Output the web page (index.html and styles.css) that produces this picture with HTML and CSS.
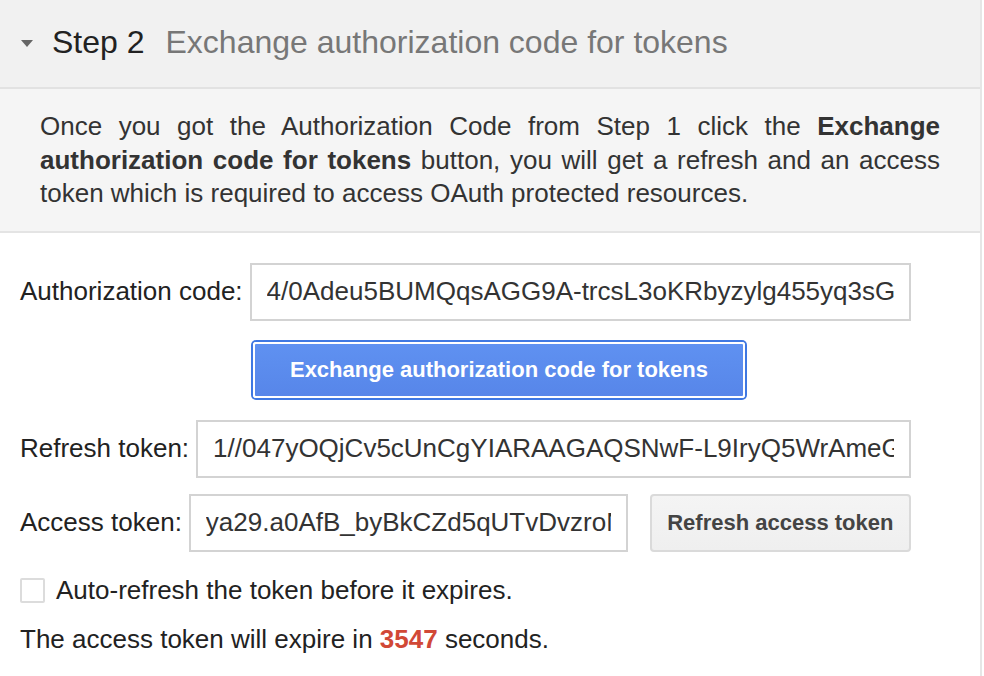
FILE: index.html
```html
<!DOCTYPE html>
<html>
<head>
<meta charset="utf-8">
<link rel="stylesheet" href="styles.css">
</head>
<body>
<div class="panel">
  <div class="step-header">
    <span class="caret"></span>
    <span class="step-num">Step 2</span>
    <span class="step-title">Exchange authorization code for tokens</span>
  </div>
  <div class="desc">
    <p>Once you got the Authorization Code from Step 1 click the <b>Exchange authorization code for tokens</b> button, you will get a refresh and an access token which is required to access OAuth protected resources.</p>
  </div>
  <div class="form">
    <div class="row">
      <label class="lbl">Authorization code:</label>
      <input class="field field-auth" type="text" value="4/0Adeu5BUMQqsAGG9A-trcsL3oKRbyzylg455yq3sGZwX8kQp">
    </div>
    <div class="row row-btn">
      <button class="btn-primary">Exchange authorization code for tokens</button>
    </div>
    <div class="row row-refresh">
      <label class="lbl">Refresh token:</label>
      <input class="field field-refresh" type="text" value="1//047yOQjCv5cUnCgYIARAAGAQSNwF-L9IryQ5WrAmeGwq7">
    </div>
    <div class="row row-access">
      <label class="lbl">Access token:</label>
      <input class="field field-access" type="text" value="ya29.a0AfB_byBkCZd5qUTvDvzroNx4">
      <button class="btn-secondary">Refresh access token</button>
    </div>
    <div class="row row-check">
      <span class="checkbox"></span>
      <span class="check-lbl">Auto-refresh the token before it expires.</span>
    </div>
    <div class="expire">The access token will expire in <b class="secs">3547</b> seconds.</div>
  </div>
</div>
</body>
</html>
```
FILE: styles.css
```css
* { box-sizing: border-box; }
html, body { margin: 0; padding: 0; background: #fff; }
body {
  font-family: "Liberation Sans", Arial, sans-serif;
  width: 984px;
  height: 676px;
  overflow: hidden;
}
.panel {
  width: 982px;
  border-right: 2px solid #e6e6e6;
  min-height: 676px;
}
.step-header {
  height: 89px;
  background: #f1f1f1;
  border-bottom: 2px solid #e2e2e2;
  display: flex;
  align-items: center;
  padding-left: 21px;
  padding-bottom: 2px;
}
.caret {
  width: 0;
  height: 0;
  border-left: 6px solid transparent;
  border-right: 6px solid transparent;
  border-top: 7px solid #666;
  margin-right: 19px;
  margin-top: 2px;
}
.step-num {
  font-size: 32px;
  color: #222;
  margin-right: 21px;
}
.step-title {
  font-size: 32px;
  color: #777;
}
.desc {
  background: #f5f5f5;
  border-bottom: 2px solid #e4e4e4;
  padding: 21px 40px 20px 40px;
}
.desc p {
  margin: 0;
  font-size: 26px;
  line-height: 33.5px;
  color: #333;
  text-align: justify;
}
.desc b { color: #333; }
.form {
  padding: 30px 20px 0 20px;
}
.row {
  display: flex;
  align-items: center;
}
.lbl {
  font-size: 26px;
  color: #222;
  margin-right: 7px;
  white-space: nowrap;
}
.field {
  height: 58px;
  border: 2px solid #d3d3d3;
  padding: 0 15px;
  font-family: "Liberation Sans", Arial, sans-serif;
  font-size: 26px;
  color: #333;
  background: #fff;
  outline: none;
  border-radius: 0;
}
.field-auth { width: 661px; }
.field-refresh { width: 715px; }
.field-access { width: 439px; }
.row-btn {
  margin-top: 21px;
  padding-left: 233px;
}
.btn-primary {
  width: 492px;
  height: 56px;
  border: 2px solid #fff;
  border-radius: 3px;
  box-shadow: 0 0 0 2px #3f78e2;
  background: linear-gradient(#5f91f1, #5786e9);
  color: #fff;
  font-family: "Liberation Sans", Arial, sans-serif;
  font-weight: bold;
  font-size: 22px;
  padding: 0;
}
.row-refresh { margin-top: 22px; }
.row-access { margin-top: 16px; }
.btn-secondary {
  margin-left: 22px;
  width: 261px;
  height: 58px;
  border: 2px solid #dadada;
  border-radius: 4px;
  background: linear-gradient(#f4f4f4, #efefef);
  color: #444;
  font-family: "Liberation Sans", Arial, sans-serif;
  font-weight: bold;
  font-size: 22px;
  padding: 0;
}
.row-check { margin-top: 23px; }
.checkbox {
  width: 25px;
  height: 25px;
  border: 2px solid #dcdcdc;
  border-radius: 2px;
  background: #fff;
  margin-right: 11px;
}
.check-lbl {
  font-size: 26px;
  color: #222;
}
.expire {
  margin-top: 18px;
  font-size: 26px;
  color: #222;
  line-height: 30px;
}
.secs { color: #d14836; }
```
